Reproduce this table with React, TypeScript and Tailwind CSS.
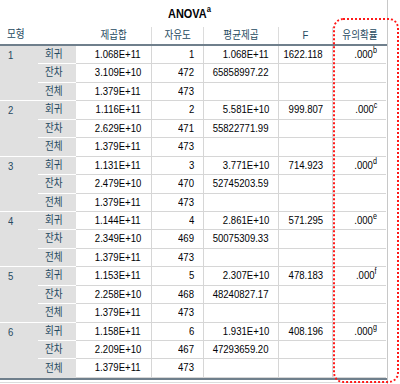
import React from 'react'

// ANOVA output table (SPSS style)
const groups = [
  { m: '1', ss: ['1.068E+11', '3.109E+10', '1.379E+11'], df: ['1', '472', '473'], ms: ['1.068E+11', '65858997.22'], f: '1622.118', sig: 'b' },
  { m: '2', ss: ['1.116E+11', '2.629E+10', '1.379E+11'], df: ['2', '471', '473'], ms: ['5.581E+10', '55822771.99'], f: '999.807', sig: 'c' },
  { m: '3', ss: ['1.131E+11', '2.479E+10', '1.379E+11'], df: ['3', '470', '473'], ms: ['3.771E+10', '52745203.59'], f: '714.923', sig: 'd' },
  { m: '4', ss: ['1.144E+11', '2.349E+10', '1.379E+11'], df: ['4', '469', '473'], ms: ['2.861E+10', '50075309.33'], f: '571.295', sig: 'e' },
  { m: '5', ss: ['1.153E+11', '2.258E+10', '1.379E+11'], df: ['5', '468', '473'], ms: ['2.307E+10', '48240827.17'], f: '478.183', sig: 'f' },
  { m: '6', ss: ['1.158E+11', '2.209E+10', '1.379E+11'], df: ['6', '467', '473'], ms: ['1.931E+10', '47293659.20'], f: '408.196', sig: 'g' },
]

const labels = ['회귀', '잔차', '전체']

const num = 'flex items-center justify-end border-b border-r border-[#d6d6d6] pr-[9px] text-[#010205]'

// the screenshot is squeezed sideways, so text is drawn narrower than it is tall
function T({ children, o = 'origin-right' }: { children: React.ReactNode; o?: string }) {
  return <span className={`inline-block whitespace-nowrap scale-x-[0.84] ${o}`}>{children}</span>
}

export default function App() {
  return (
    <div className="relative h-[384px] w-[400px] overflow-hidden bg-white font-['Liberation_Sans','Noto_Sans_CJK_KR',sans-serif] text-[11.4px] leading-none">
      <div className="h-full w-[388px] border-r border-[#c8c8c8]">
        {/* Title */}
        <div className="flex h-[25px] items-center justify-center pr-[8px] pt-[1px] text-[13px] font-bold text-[#010205]">
          <T o="origin-center">
            ANOVA<sup className="relative -top-[6px] text-[9px] font-bold">a</sup>
          </T>
        </div>

        {/* Header */}
        <div className="grid h-[21px] grid-cols-[76px_76px_52px_75px_54px_54px] border-b-2 border-[#6f7f8c] text-[#264a60]">
          <div className="flex items-center pl-[7px]"><T o="origin-left">모형</T></div>
          <div className="mt-[2px] flex items-center justify-center border-r border-[#dcdcdc]"><T o="origin-center">제곱합</T></div>
          <div className="mt-[2px] flex items-center justify-center border-r border-[#dcdcdc]"><T o="origin-center">자유도</T></div>
          <div className="mt-[2px] flex items-center justify-center border-r border-[#dcdcdc]"><T o="origin-center">평균제곱</T></div>
          <div className="mt-[2px] flex items-center justify-center border-r border-[#dcdcdc]"><T o="origin-center">F</T></div>
          <div className="mt-[2px] flex items-center justify-center"><T o="origin-center">유의확률</T></div>
        </div>

        {/* Body */}
        <div className="grid auto-rows-[18.44px] grid-cols-[38px_38px_76px_52px_75px_54px_53px] border-b-2 border-[#6f7f8c]">
          {groups.map((g, gi) => (
            <React.Fragment key={g.m}>
              {labels.map((lab, ri) => (
                <React.Fragment key={lab}>
                  {ri === 0 && (
                    <div
                      className={`row-span-3 bg-[#e0e0e0] pl-[8px] pt-[4px] text-[#264a60] ${gi < 5 ? 'border-b border-white' : ''}`}
                    >
                      <T o="origin-left">{g.m}</T>
                    </div>
                  )}
                  <div
                    className={`flex items-center bg-[#e0e0e0] pl-[7px] text-[#264a60] ${gi === 5 && ri === 2 ? '' : 'border-b border-white'}`}
                  >
                    <T o="origin-left">{lab}</T>
                  </div>
                  <div className={`${num} pr-[10px]`}><T>{g.ss[ri]}</T></div>
                  <div className={`${num} pr-[8px]`}><T>{g.df[ri]}</T></div>
                  <div className={num}><T>{g.ms[ri] ?? ''}</T></div>
                  <div className={`${num} pr-[7px]`}><T>{ri === 0 ? g.f : ''}</T></div>
                  <div className="flex items-center justify-end border-b border-[#d6d6d6] pr-[9px] text-[#010205]">
                    {ri === 0 && (
                      <T>
                        .000<sup className="relative -top-[5px] text-[8.5px]">{g.sig}</sup>
                      </T>
                    )}
                  </div>
                </React.Fragment>
              ))}
            </React.Fragment>
          ))}
        </div>
        <div className="mt-[2px] h-px w-full bg-[#dcdcdc]" />
      </div>

      {/* highlight around significance column */}
      <div className="absolute left-[333px] top-[18px] h-[365px] w-[66px] rounded-[10px] border-2 border-dotted border-[#ff1a1a]" />
    </div>
  )
}
